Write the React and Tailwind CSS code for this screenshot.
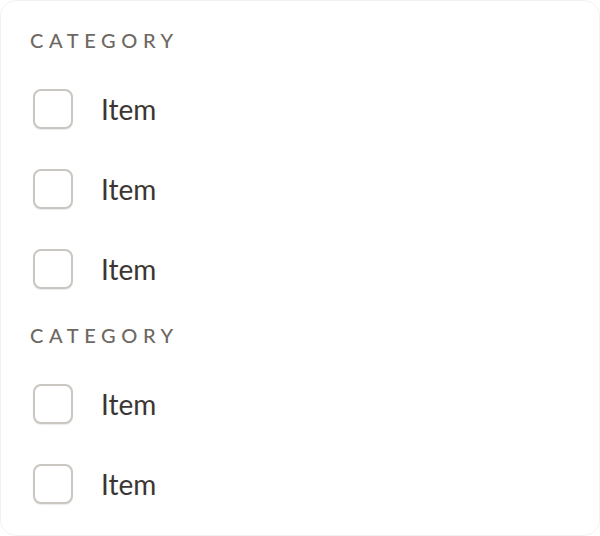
export default function App() {
  const Cat = ({ className }) => (
    <div
      className={`h-[26px] leading-[26px] text-[20px] tracking-[0.28em] text-[#6e6863] font-medium ${className}`}
      style={{ fontFamily: "Lato, 'Noto Sans', sans-serif" }}
    >
      CATEGORY
    </div>
  );
  const Item = () => (
    <label className="flex h-10 items-center gap-7">
      <span className="h-10 w-10 rounded-lg border-2 border-[#cac6c2] bg-white shadow-[0_1px_1px_rgba(0,0,0,0.08)]" />
      <span
        className="text-[28px] leading-none text-[#3b3633]"
        style={{ fontFamily: "Lato, 'Noto Sans', sans-serif" }}
      >
        Item
      </span>
    </label>
  );
  return (
    <div className="h-[536px] w-[600px] bg-white">
      <div className="h-full w-full rounded-2xl border border-[#f1f1f1] bg-white pl-8 pt-[26px]">
        <Cat className="-ml-[3px] mb-[36px]" />
        <div className="flex flex-col gap-10">
          <Item />
          <Item />
          <Item />
        </div>
        <Cat className="-ml-[3px] mt-[33px] mb-[36px]" />
        <div className="flex flex-col gap-10">
          <Item />
          <Item />
        </div>
      </div>
    </div>
  );
}
